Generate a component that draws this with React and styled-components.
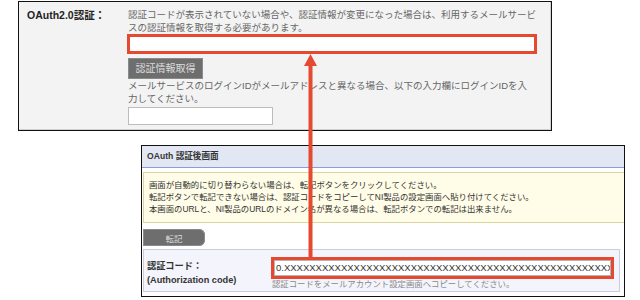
import React from 'react'
import styled, { createGlobalStyle } from 'styled-components'

const RED = '#e5492f'

const GlobalStyle = createGlobalStyle`
  body {
    margin: 0;
    background: #fff;
    font-family: "Liberation Sans", "Noto Sans CJK JP", sans-serif;
  }
`

const Canvas = styled.div`
  position: relative;
  width: 640px;
  height: 300px;
  padding-top: 1px;
  box-sizing: border-box;
  overflow: hidden;
`

/* ---- top: settings form ---- */

const SettingsPanel = styled.div`
  margin-left: 18px;
  width: 534px;
  height: 130px;
  box-sizing: border-box;
  border: 1px solid #111;
  background: #f3f3f3;
`

const SettingsCell = styled.div`
  height: 100%;
  box-sizing: border-box;
  border-right: 1px solid #d0d0d0;
  border-bottom: 1px solid #d0d0d0;
  display: grid;
  grid-template-columns: 109px 1fr;
`

const FieldLabel = styled.div`
  padding: 7px 0 0 8px;
  font-size: 10.5px;
  font-weight: bold;
  line-height: 13px;
  color: #222;
`

const FieldBody = styled.div`
  padding-top: 6px;
  font-size: 9.5px;
  line-height: 13px;
  color: #666;
  white-space: nowrap;
`

const Highlight = styled.div`
  width: ${p => p.w}px;
  height: ${p => p.h}px;
  box-sizing: border-box;
  border: 3px solid ${RED};
  background: #fff;
  margin-left: ${p => p.shift || 0}px;
`

const GrayButton = styled.div`
  display: flex;
  align-items: center;
  justify-content: center;
  width: ${p => p.w}px;
  height: ${p => p.h}px;
  margin-top: ${p => p.top}px;
  background: #6e6e6e;
  color: #dcdcdc;
  font-size: ${p => p.size}px;
  border-radius: ${p => p.radius || '0'};
  box-shadow: inset 0 0 0 1px #8a8a8a;
`

const TextInput = styled.div`
  width: 145px;
  height: 18px;
  margin-top: 2px;
  box-sizing: border-box;
  border: 1px solid #bcbcbc;
  background: #fff;
`

/* ---- bottom: OAuth result page ---- */

const ResultPanel = styled.div`
  margin: 14px 0 0 141px;
  width: 484px;
  height: 152px;
  box-sizing: border-box;
  border: 1px solid #111;
  background: #fff;
  overflow: hidden;
`

const ResultHeader = styled.div`
  height: 21px;
  line-height: 21px;
  padding-left: 5px;
  background: #e3e7f4;
  border-bottom: 1px solid #86a0d6;
  font-size: 8.6px;
  font-weight: bold;
  color: #333;
`

const Notice = styled.div`
  margin: 4px -10px 0 1px;
  padding: 6px 5px 7px;
  border: 1px solid #d9d79f;
  background: #fffde7;
  font-size: 8.4px;
  line-height: 12px;
  color: #333;
  white-space: nowrap;
`

const CodeRow = styled.div`
  margin: 3px 4px 0 1px;
  height: 43px;
  box-sizing: border-box;
  border: 1px solid #c9cbe0;
  background: #f3f4fc;
  display: grid;
  grid-template-columns: 127px 1fr;
`

const CodeLabel = styled.div`
  padding: 9px 0 0 3px;
  font-size: 9.2px;
  font-weight: bold;
  line-height: 14px;
  color: #333;
`

const CodeField = styled.div`
  padding-top: 7px;
`

const CodeInput = styled.div`
  height: 100%;
  box-sizing: border-box;
  border: 1px solid #b5b5b5;
  background: #fff;
  padding-left: 1px;
  font-size: 9.5px;
  line-height: 14px;
  color: #333;
  white-space: nowrap;
  overflow: hidden;
`

const Hint = styled.div`
  padding-left: 1px;
  font-size: 8.4px;
  line-height: 11px;
  color: #8a8a8a;
`

/* ---- overlay arrow linking the two red boxes ---- */

const Arrow = styled.svg`
  position: absolute;
  left: 304px;
  top: 54px;
`

export default function App() {
  const code = '0.' + 'X'.repeat(70)
  return (
    <Canvas>
      <GlobalStyle />
      <SettingsPanel>
        <SettingsCell>
          <FieldLabel>OAuth2.0認証：</FieldLabel>
          <FieldBody>
            認証コードが表示されていない場合や、認証情報が変更になった場合は、利用するメールサービ<br />
            スの認証情報を取得する必要があります。
            <Highlight w={410} h={20} shift={-1} />
            <GrayButton w={75} h={21} top={4} size={10}>認証情報取得</GrayButton>
            メールサービスのログインIDがメールアドレスと異なる場合、以下の入力欄にログインIDを入<br />
            力してください。
            <TextInput />
          </FieldBody>
        </SettingsCell>
      </SettingsPanel>

      <ResultPanel>
        <ResultHeader>OAuth 認証後画面</ResultHeader>
        <Notice>
          画面が自動的に切り替わらない場合は、転記ボタンをクリックしてください。<br />
          転記ボタンで転記できない場合は、認証コードをコピーしてNI製品の設定画面へ貼り付けてください。<br />
          本画面のURLと、NI製品のURLのドメイン名が異なる場合は、転記ボタンでの転記は出来ません。
        </Notice>
        <GrayButton w={62} h={17} top={6} size={8.5} radius="0 6px 6px 0" style={{ marginLeft: 1 }}>
          転記
        </GrayButton>
        <CodeRow>
          <CodeLabel>
            認証コード：<br />
            (Authorization code)
          </CodeLabel>
          <CodeField>
            <Highlight w={343} h={22}>
              <CodeInput>{code}</CodeInput>
            </Highlight>
            <Hint>認証コードをメールアカウント設定画面へコピーしてください。</Hint>
          </CodeField>
        </CodeRow>
      </ResultPanel>

      <Arrow width="13" height="205" viewBox="0 0 13 205">
        <polygon points="6.5,0 13,12 0,12" fill={RED} />
        <rect x="4.5" y="10" width="4" height="195" fill={RED} />
      </Arrow>
    </Canvas>
  )
}
